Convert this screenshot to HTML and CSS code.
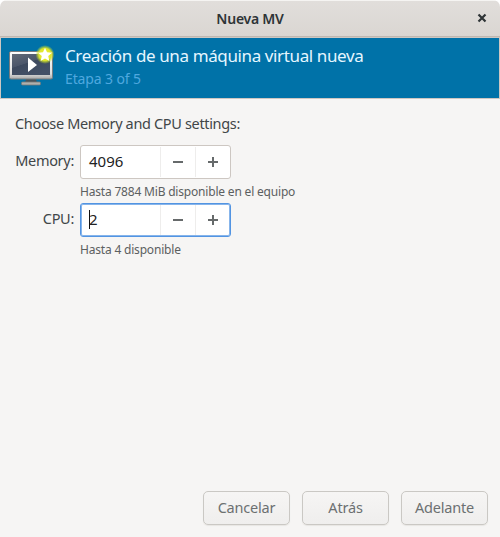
FILE: index.html
```html
<!DOCTYPE html>
<html lang="es">
<head>
<meta charset="utf-8">
<title>Nueva MV</title>
<link rel="stylesheet" href="styles.css">
</head>
<body>
<div class="window">
  <header class="titlebar">
    <h1 class="window-title">Nueva MV</h1>
    <svg class="close" width="10" height="10" viewBox="0 0 10 10"><path d="M1.5 1.500l7 7M8.500 1.500l-7 7"/></svg>
  </header>
  <section class="banner">
    <svg class="monitor" width="52" height="48" viewBox="0 0 52 48">
      <defs>
        <linearGradient id="frame" x1="0" y1="0" x2="0" y2="1"><stop offset="0" stop-color="#fff"/><stop offset=".8" stop-color="#ddd"/><stop offset="1" stop-color="#a8a8a8"/></linearGradient>
        <linearGradient id="screen" x1="0" y1="0" x2=".6" y2="1"><stop offset="0" stop-color="#626a78"/><stop offset=".48" stop-color="#4b566a"/><stop offset=".5" stop-color="#3d495e"/><stop offset="1" stop-color="#435067"/></linearGradient>
        <radialGradient id="glow"><stop offset="0" stop-color="#f5ef35"/><stop offset=".65" stop-color="#dce52b"/><stop offset="1" stop-color="#b8d82b" stop-opacity="0"/></radialGradient>
      </defs>
      <path d="M21 37h10l1 4H20z" fill="#48545b"/>
      <rect x="16.500" y="40" width="19" height="3" rx="1" fill="#aeb0ae" stroke="#737977" stroke-width=".8"/>
      <rect x="4.500" y="9.500" width="43" height="27.500" rx="1.500" fill="url(#frame)" stroke="#777c80"/>
      <rect x="7" y="12" width="38" height="21" fill="url(#screen)"/>
      <path d="M23 15.500l9 7.500-9 7z" fill="#fff"/>
      <circle cx="40" cy="12.500" r="9.500" fill="url(#glow)"/>
      <path d="M40 5.800l2 4.500 5 .5-3.800 3.300 1.200 4.900-4.400-2.500-4.400 2.500 1.200-4.900-3.800-3.300 5-.5z" fill="#fff"/>
    </svg>
    <div class="banner-text">
      <div class="heading">Creación de una máquina virtual nueva</div>
      <div class="step">Etapa 3 of 5</div>
    </div>
  </section>
  <main class="content">
    <p class="intro">Choose Memory and CPU settings:</p>
    <div class="form">
      <span class="label">Memory:</span>
      <div class="spin">
        <span class="value">4096</span>
        <span class="adjust"><svg width="12" height="12"><path d="M1 6h10"/></svg></span>
        <span class="adjust"><svg width="12" height="12"><path d="M1 6h10M6 1v10"/></svg></span>
      </div>
      <span class="hint">Hasta 7884 MiB disponible en el equipo</span>
      <span class="label">CPU:</span>
      <div class="spin focused">
        <span class="value"><i class="caret"></i>2</span>
        <span class="adjust"><svg width="12" height="12"><path d="M1 6h10"/></svg></span>
        <span class="adjust"><svg width="12" height="12"><path d="M1 6h10M6 1v10"/></svg></span>
      </div>
      <span class="hint">Hasta 4 disponible</span>
    </div>
  </main>
  <footer class="actions">
    <button class="button">Cancelar</button>
    <button class="button">Atrás</button>
    <button class="button">Adelante</button>
  </footer>
</div>
</body>
</html>
```
FILE: styles.css
```css
* { box-sizing: border-box; }
body { margin: 0; background: #fff; font: 14.5px/20px "Noto Sans", sans-serif; color: #414648; }
.window { height: 537px; display: flex; flex-direction: column; background: #f6f5f4; border-radius: 7px 7px 0 0; overflow: hidden; }
.titlebar { height: 37px; flex: none; display: grid; grid-template-columns: 1fr auto 1fr; align-items: center; background: linear-gradient(#e1dedb, #dad6d2); border-top: 1px solid #f5f4f2; border-bottom: 1px solid #bfb8b1; padding: 0 13px; }
.window-title { grid-column: 2; margin: 0; font-size: 14px; line-height: 20px; font-weight: 600; letter-spacing: -.25px; color: #2e3436; }
.close { justify-self: end; position: relative; top: -1px; fill: none; stroke: #2e3436; stroke-width: 2.2; }
.banner { height: 62px; flex: none; display: flex; padding: 4px 4px 0; background: #0072a8; border: 1px solid #cdc7c2; }
.monitor { flex: none; }
.banner-text { padding: 2px 0 0 8px; white-space: nowrap; }
.heading { font-size: 17px; line-height: 24px; letter-spacing: -.38px; color: #e5f6ff; }
.step { font-size: 14px; line-height: 21px; letter-spacing: -.13px; color: #4fa8df; }
.content { flex: 1; padding: 14px 15px; }
.intro { margin: 0 0 12px; letter-spacing: -.34px; }
.form { display: grid; grid-template-columns: 59px 151px; grid-template-rows: 34px 24px 34px 24px; column-gap: 6px; }
.label { text-align: right; line-height: 31px; letter-spacing: -.3px; white-space: nowrap; }
.spin { display: flex; background: #fff; border: 1px solid #cdc7c2; border-radius: 3px; overflow: hidden; }
.focused { border: 1px solid #5294e2; box-shadow: inset 0 0 0 1px #87b5eb; }
.value { width: 79px; padding-left: 8px; line-height: 31px; font-size: 15px; color: #222; position: relative; }
.caret { position: absolute; left: 8px; top: 6px; width: 1px; height: 19px; background: #111; }
.adjust { flex: 1; display: flex; align-items: center; justify-content: center; border-left: 1px solid #eeedec; margin-block: 1px; }
.adjust svg { fill: none; stroke: #666a6b; stroke-width: 2; }
.hint { grid-column: 2; white-space: nowrap; font-size: 12px; line-height: 25px; letter-spacing: -.19px; color: #5c6061; }
.actions { display: flex; justify-content: flex-end; gap: 12px; padding: 0 12px 12px; }
.button { width: 87px; height: 34px; padding: 0 0 2px; border: 1px solid #cac8c4; border-radius: 5px; background: linear-gradient(#f6f5f4, #efeeed); box-shadow: 0 1px 1px #e8e6e3; font: 14.5px/20px "Noto Sans", sans-serif; letter-spacing: -.2px; color: #6c7071; }
```
